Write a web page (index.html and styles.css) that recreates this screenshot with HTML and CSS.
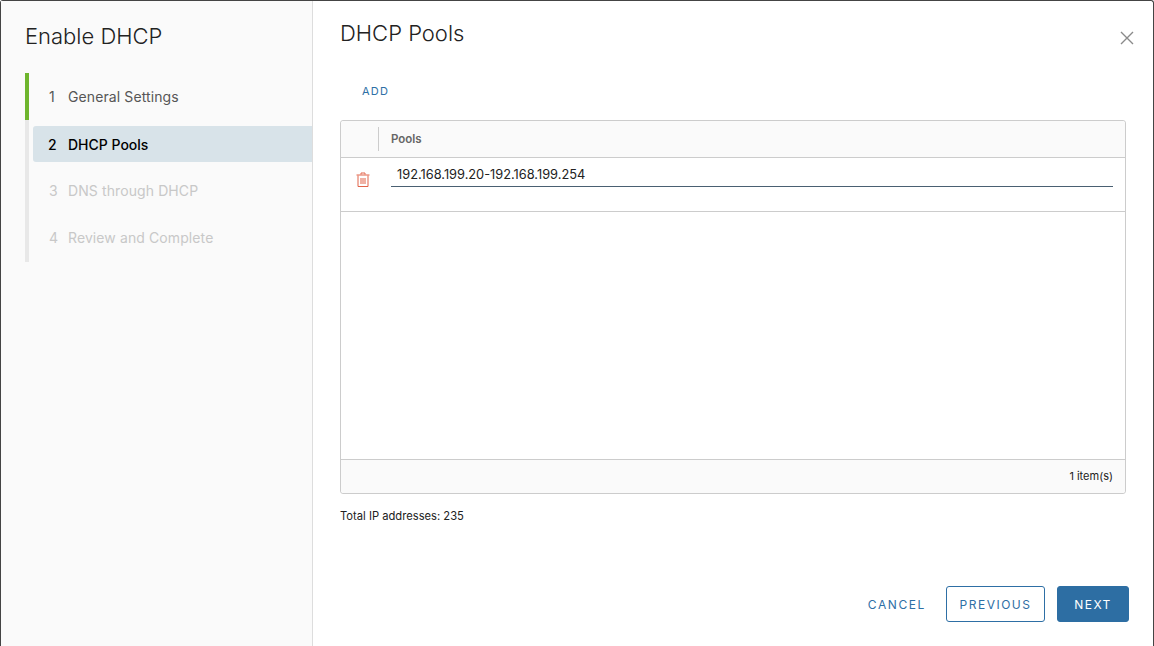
FILE: index.html
```html
<!DOCTYPE html>
<html lang="en">
<head>
<meta charset="utf-8">
<title>Enable DHCP</title>
<link rel="stylesheet" href="styles.css">
</head>
<body>
<div class="modal">
  <aside class="side">
    <h1 class="side-title">Enable DHCP</h1>
    <ol class="steps">
      <li class="step done"><span class="num">1</span><span>General Settings</span></li>
      <li class="step active"><span class="num">2</span><span>DHCP Pools</span></li>
      <li class="step off"><span class="num">3</span><span>DNS through DHCP</span></li>
      <li class="step off"><span class="num">4</span><span>Review and Complete</span></li>
    </ol>
  </aside>
  <main class="main">
    <header class="head">
      <h2 class="title">DHCP Pools</h2>
      <svg class="close" width="14" height="14" viewBox="0 0 14 14" aria-label="Close"><path d="M1 1L13 13M13 1L1 13" stroke="#8a8a8a" stroke-width="1.4" fill="none"/></svg>
    </header>
    <button class="add">ADD</button>
    <section class="grid">
      <div class="grid-head"><div class="col-act"></div><div class="col-name">Pools</div></div>
      <div class="grid-row">
        <svg class="trash" width="16" height="16" viewBox="0 0 16 16" aria-label="Delete"><path d="M6 2.5V1H10V2.5M1.5 3H14.5M3 3.5V14.5H13V3.5M6 6V12M8 6V12M10 6V12" stroke="#e1644a" stroke-width="1" fill="none"/></svg>
        <div class="pool">192.168.199.20-192.168.199.254</div>
      </div>
      <div class="grid-body"></div>
      <div class="grid-foot">1 item(s)</div>
    </section>
    <p class="total">Total IP addresses: 235</p>
    <footer class="actions">
      <button class="btn link">CANCEL</button>
      <button class="btn outline">PREVIOUS</button>
      <button class="btn solid">NEXT</button>
    </footer>
  </main>
</div>
</body>
</html>
```
FILE: styles.css
```css
* { box-sizing: border-box; }
html, body { margin: 0; height: 100%; }
body { font-family: "Inter", "Liberation Sans", sans-serif; color: #222; background: #fff; overflow: hidden; }
.modal { display: flex; width: 1154px; height: 646px; border: 1px solid #444; border-bottom: 0; border-radius: 3px 3px 0 0; background: #fff; }
.side { width: 312px; flex: none; background: #fafafa; border-right: 1px solid #ddd; padding: 22px 0 0 24px; }
.side-title { margin: 0 0 23px; font-size: 22px; line-height: 27px; font-weight: 300; color: #222; }
.steps { list-style: none; margin: 0; padding: 0 0 1px; border-left: 4px solid #e8e8e8; }
.step { display: flex; align-items: center; height: 47px; padding-left: 20px; font-size: 14px; letter-spacing: .1px; color: #565656; }
.num { width: 19px; flex: none; }
.done { border-left: 4px solid #6eb52d; margin-left: -4px; padding-left: 20px; }
.active { height: 36px; margin: 6px 0 5px 4px; padding-left: 15px; background: #d8e3e9; border-radius: 3px 0 0 3px; color: #000; font-weight: 500; letter-spacing: 0; }
.active .num { width: 20px; }
.off { color: #c8c8c8; }
.main { flex: 1; display: flex; flex-direction: column; padding: 0 24px 24px 27px; min-width: 0; }
.head { display: flex; justify-content: space-between; flex: none; height: 46px; padding-top: 19px; }
.title { margin: 0; font-size: 22px; line-height: 27px; font-weight: 300; color: #222; }
.close { margin: 11px -5px 0 0; }
.add { align-self: flex-start; flex: none; height: 36px; margin: 23px 0 14px 22px; padding: 6px 0 0; border: 0; background: none; font: 400 11px "Inter", sans-serif; letter-spacing: 1.2px; color: #2e6fa5; }
.grid { width: 786px; height: 374px; flex: none; display: flex; flex-direction: column; border: 1px solid #ccc; border-radius: 3px; }
.grid-head { display: flex; align-items: center; height: 37px; flex: none; background: #fafafa; border-bottom: 1px solid #ccc; border-radius: 3px 3px 0 0; }
.col-act { width: 38px; height: 24px; border-right: 1px solid #ccc; }
.col-name { padding-left: 12px; font-size: 11.5px; font-weight: 600; color: #666; }
.grid-row { display: flex; align-items: flex-start; height: 54px; flex: none; padding: 0 12px 0 14px; border-bottom: 1px solid #ccc; }
.trash { flex: none; margin-top: 14px; }
.pool { flex: 1; height: 29px; margin-left: 20px; padding: 9px 0 0 6px; font-size: 12.8px; line-height: 16px; border-bottom: 1px solid #4a6072; color: #222; }
.grid-body { flex: 1; }
.grid-foot { height: 34px; flex: none; padding-right: 12px; background: #fafafa; border-top: 1px solid #ccc; border-radius: 0 0 3px 3px; font-size: 11px; line-height: 32px; text-align: right; color: #222; }
.total { margin: 15px 0 0; font-size: 11.2px; line-height: 14px; color: #222; }
.actions { margin: auto 0 0; display: flex; justify-content: flex-end; align-items: center; gap: 12px; }
.btn { height: 36px; border-radius: 3px; font: 400 12px "Inter", sans-serif; letter-spacing: 1.5px; color: #2e6fa5; background: none; border: 1px solid transparent; }
.link { padding: 0; margin-right: 7px; letter-spacing: 1.6px; }
.outline { width: 99px; padding: 0; border-color: #2e6fa5; }
.solid { width: 72px; padding: 0; background: #2d6ea3; border-color: #2d6ea3; color: #fff; }
```
